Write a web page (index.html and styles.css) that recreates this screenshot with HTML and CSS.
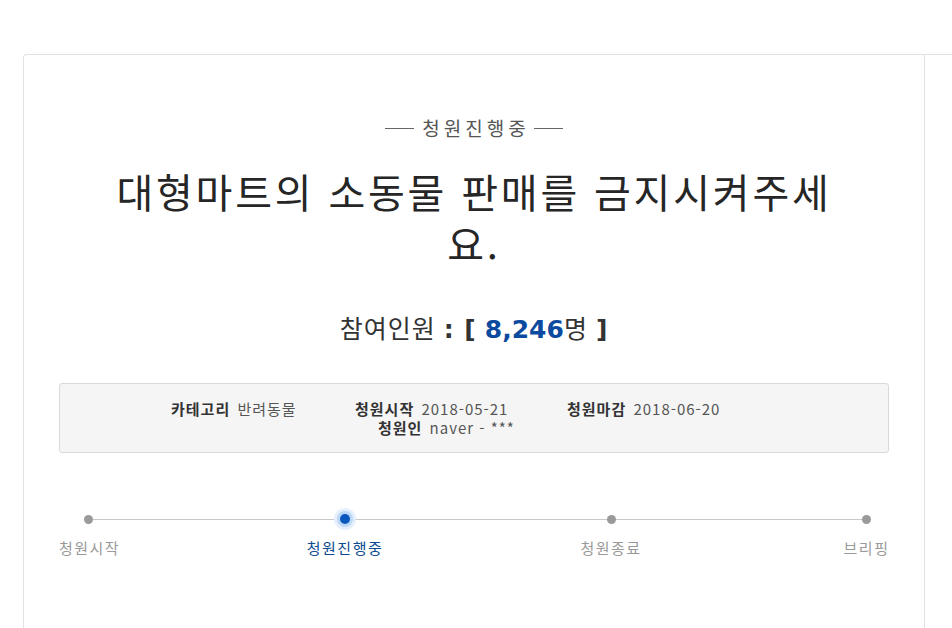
FILE: index.html
```html
<!DOCTYPE html>
<html lang="ko">
<head>
<meta charset="utf-8">
<title>청원진행중</title>
<link rel="stylesheet" href="styles.css">
</head>
<body>
<div class="page">
  <div class="card">
    <div class="main">
      <div class="status"><span class="dash"></span><span class="status-text">청원진행중</span><span class="dash"></span></div>
      <h1 class="title">대형마트의 소동물 판매를 금지시켜주세요.</h1>
      <div class="count">참여인원 <b>: [</b> <b class="num">8,246</b>명 <b>]</b></div>
      <ul class="info">
        <li class="item i1"><b>카테고리</b> 반려동물</li>
        <li class="item i2"><b>청원시작</b> 2018-05-21</li>
        <li class="item i3"><b>청원마감</b> 2018-06-20</li>
        <li class="item i4"><b>청원인</b> naver - ***</li>
      </ul>
      <div class="steps">
        <div class="step s1"><span class="dot"></span><span class="label">청원시작</span></div>
        <div class="step s2 active"><span class="dot"></span><span class="label">청원진행중</span></div>
        <div class="step s3"><span class="dot"></span><span class="label">청원종료</span></div>
        <div class="step s4"><span class="dot"></span><span class="label">브리핑</span></div>
      </div>
    </div>
  </div>
</div>
</body>
</html>
```
FILE: styles.css
```css
html, body {
  margin: 0;
  padding: 0;
  background: #fff;
  overflow: hidden;
}
body {
  font-family: "Noto Sans CJK KR", "Noto Sans", sans-serif;
  color: #333;
}
.page {
  padding: 54px 0 0 23px;
}
.card {
  border-top: 1px solid #e2e2e2;
  border-left: 1px solid #e2e2e2;
  border-top-left-radius: 4px;
  height: 600px;
  display: flex;
}
.main {
  width: 901px;
  box-sizing: border-box;
  border-right: 1px solid #e2e2e2;
  padding: 61px 35px 0 35px;
}
.status {
  display: flex;
  justify-content: center;
  align-items: center;
  gap: 8px;
  font-size: 19px;
  line-height: 24px;
  color: #555;
}
.status-text {
  letter-spacing: 4px;
  margin-right: -4px;
}
.dash {
  display: block;
  width: 29px;
  height: 1px;
  background: #666;
}
.title {
  margin: 25px auto 0;
  max-width: 740px;
  text-align: center;
  font-size: 40px;
  line-height: 52px;
  font-weight: 400;
  letter-spacing: 2.8px;
  color: #262626;
}
.count {
  margin-top: 41px;
  text-align: center;
  font-size: 25px;
  line-height: 34px;
  letter-spacing: 1px;
  color: #333;
}
.count b {
  font-family: "DejaVu Sans", "Noto Sans CJK KR", sans-serif;
  font-weight: 700;
}
.count .num {
  color: #0b4a9e;
  letter-spacing: 0;
}
.info {
  list-style: none;
  margin: 36px 0 0;
  padding: 15px 100px 15px;
  background: #f5f5f5;
  border: 1px solid #d9d9d9;
  border-radius: 3px;
  display: flex;
  flex-wrap: wrap;
  justify-content: center;
  font-size: 15px;
  line-height: 19px;
  letter-spacing: 1px;
  color: #555;
}
.info b {
  color: #333;
  font-weight: 700;
  margin-right: 2px;
}
.item { white-space: nowrap; }
.i1 { width: 184px; padding-left: 2px; }
.i2 { width: 212px; }
.i3 { width: 212px; }
.i4 { width: 192px; }
.steps {
  position: relative;
  margin-top: 56px;
  display: grid;
  grid-template-columns: 58px 190fr 76px 198fr 60px 203fr 45px;
}
.steps::before {
  content: "";
  position: absolute;
  left: 29px;
  right: 22px;
  top: 10px;
  height: 1px;
  background: #c8c8c8;
}
.step {
  position: relative;
  display: flex;
  flex-direction: column;
  align-items: center;
}
.s1 { grid-column: 1; }
.s2 { grid-column: 3; }
.s3 { grid-column: 5; }
.s4 { grid-column: 7; }
.dot {
  width: 9px;
  height: 9px;
  margin: 6px 0 5px;
  border-radius: 50%;
  background: #9a9a9a;
}
.active .dot {
  width: 10px;
  height: 10px;
  margin: 5px 0;
  background: #0a58bd;
  box-shadow: 0 0 0 3px #bcd7f8, 0 0 0 6px #e6f0fc;
}
.label {
  margin-top: 9px;
  font-size: 15px;
  line-height: 20px;
  letter-spacing: 1.5px;
  color: #999;
  white-space: nowrap;
}
.s1 .label { margin-left: 3px; }
.active .label {
  color: #0c4a92;
}
```
